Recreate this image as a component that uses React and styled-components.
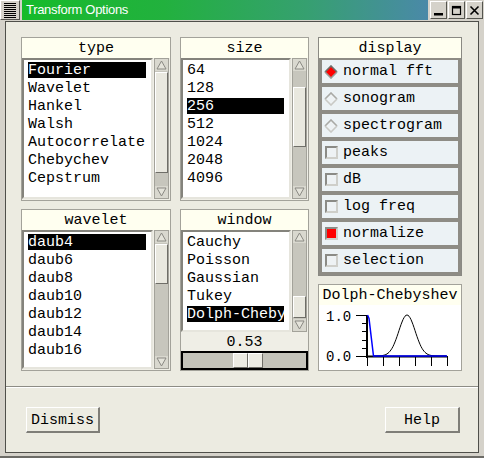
import React from "react";
import styled, { createGlobalStyle } from "styled-components";

/* ======================
   STYLED COMPONENTS
====================== */

const MONO = `"Liberation Mono", "DejaVu Sans Mono", monospace`;

const GlobalStyle = createGlobalStyle`
  html, body {
    margin: 0;
    padding: 0;
    background: #d5d2ca;
  }
`;

const Window = styled.div`
  width: 484px;
  height: 458px;
  box-sizing: border-box;
  display: flex;
  flex-direction: column;
  background: #d5d2ca;
  border-bottom: 2px solid #6c6b66;
  font-family: ${MONO};
  font-size: 15px;
  color: #000;
`;

const TitleBar = styled.div`
  height: 20px;
  flex: none;
  display: flex;
  gap: 2px;
`;

const MenuButton = styled.div`
  width: 20px;
  box-sizing: border-box;
  border: 1px solid;
  border-color: #fff #55554f #55554f #fff;
  background:
    repeating-linear-gradient(to bottom, #000 0 1px, transparent 1px 2px) 3px 2px / 12px 15px no-repeat,
    #d5d2ca;
`;

const Title = styled.div`
  flex: 1;
  padding-left: 4px;
  line-height: 20px;
  background: linear-gradient(90deg, #16bb2b 0%, #22b13e 35%, #36a070 70%, #4a89a8 100%);
  color: #fff;
  font-family: "Liberation Sans", Arial, sans-serif;
  font-size: 13px;
  letter-spacing: -0.3px;
`;

const Controls = styled.div`
  display: flex;
  gap: 1px;
  padding: 1px 1px 1px 0;
`;

const CtrlButton = styled.div`
  width: 17px;
  box-sizing: border-box;
  border: 1px solid;
  border-color: #fff #55554f #55554f #fff;
  background: #d5d2ca;
  display: flex;
  align-items: center;
  justify-content: center;
`;

const Body = styled.div`
  flex: 1;
  margin: 1px 5px 3px 5px;
  border: 1px solid #4f4f4a;
  background: #ecebe1;
  display: flex;
  flex-direction: column;
`;

const Grid = styled.div`
  display: flex;
  gap: 9px;
  padding: 15px 15px 0 15px;
  height: 334px;
`;

const Column = styled.div`
  width: ${(p) => p.$w}px;
  display: flex;
  flex-direction: column;
  gap: 8px;
`;

const Panel = styled.div`
  box-sizing: border-box;
  border: 1px solid ${(p) => (p.$dark ? "#8a8983" : "#a3a29a")};
  background: ${(p) => (p.$dark ? "#8e8c85" : "#efeee6")};
  display: flex;
  flex-direction: column;
  ${(p) => (p.$h ? `height: ${p.$h}px; flex: none;` : "flex: 1;")}
`;

const PanelHeader = styled.div`
  height: 20px;
  flex: none;
  box-sizing: border-box;
  padding-top: 1px;
  line-height: 20px;
  text-align: center;
  background: #fffff0;
  white-space: nowrap;
`;

const ListBox = styled.div`
  display: flex;
  gap: 1px;
  padding: 0 1px ${(p) => (p.$h ? 0 : 1)}px 0;
  ${(p) => (p.$h ? `height: ${p.$h}px; flex: none; box-sizing: border-box;` : "flex: 1;")}
`;

const List = styled.div`
  flex: 1;
  min-width: 0;
  background: #fff;
  border: 2px solid;
  border-color: #84837c #e6e5dd #e6e5dd #84837c;
  padding: 2px 5px 0 4px;
  overflow: hidden;
`;

const Item = styled.div`
  height: 16px;
  line-height: 17px;
  margin-bottom: 2px;
  white-space: nowrap;
  background: ${(p) => (p.$selected ? "#000" : "transparent")};
  color: ${(p) => (p.$selected ? "#fff" : "#000")};
`;

const Scroll = styled.div`
  width: 15px;
  flex: none;
  box-sizing: border-box;
  background: #c7c6bd;
  border: 1px solid #a3a29a;
  display: flex;
  flex-direction: column;
`;

const ArrowBox = styled.div`
  height: 12px;
  flex: none;
  display: flex;
  align-items: center;
  justify-content: center;
  background: #d9d8cf;
`;

const Track = styled.div`
  flex: 1;
  display: flex;
  flex-direction: column;
`;

const TrackGap = styled.div`
  flex: ${(p) => p.$grow} 1 0;
`;

const Thumb = styled.div`
  flex: ${(p) => p.$grow} 1 0;
  background: #e9e8df;
  border: 1px solid;
  border-color: #fff #6f6e68 #6f6e68 #fff;
`;

const ValueLabel = styled.div`
  height: 19px;
  line-height: 21px;
  text-align: center;
  flex: none;
`;

const Slider = styled.div`
  height: 19px;
  box-sizing: border-box;
  flex: none;
  border: 2px solid #000;
  background: #c4c3ba;
  display: flex;
`;

const SliderThumb = styled.div`
  width: 30px;
  display: flex;
`;

const SliderHalf = styled.div`
  flex: 1;
  background: #ecebe3;
  border: 1px solid;
  border-color: #fff #6f6e68 #6f6e68 #fff;
`;

const OptionStack = styled.div`
  display: flex;
  flex-direction: column;
  gap: 4px;
  padding: 2px 3px 3px 3px;
`;

const Option = styled.div`
  height: 23px;
  background: #ecf2f5;
  display: flex;
  align-items: center;
  gap: 5px;
  padding-left: 2px;
  white-space: nowrap;
  line-height: 24px;
`;

const IndicatorBox = styled.span`
  width: 14px;
  height: 14px;
  display: flex;
  align-items: center;
  justify-content: center;
`;

const CheckSquare = styled.span`
  width: 13px;
  height: 13px;
  box-sizing: border-box;
  border: 2px solid;
  border-color: #8b8b86 #cfcfca #cfcfca #8b8b86;
  background: ${(p) => (p.$on ? "#ff0000" : "#eef2f4")};
`;

const GraphArea = styled.div`
  flex: 1;
  background: #fff;
`;

const Separator = styled.div`
  margin-top: 15px;
  border-top: 1px solid #8d8c85;
  border-bottom: 1px solid #fff;
`;

const ButtonRow = styled.div`
  display: flex;
  justify-content: space-between;
  padding: 19px 18px 19px 20px;
`;

const PushButton = styled.button`
  width: ${(p) => p.$w}px;
  height: 26px;
  box-sizing: border-box;
  padding: 1px 0 0 0;
  background: #ecebe1;
  border-style: solid;
  border-width: 1px 2px 2px 1px;
  border-color: #fff #7f7e78 #7f7e78 #fff;
  font-family: ${MONO};
  font-size: 15px;
  color: #000;
`;

/* ======================
   PARTS
====================== */

const Arrow = ({ up }) => (
  <ArrowBox>
    <svg width="11" height="10" viewBox="0 0 11 10">
      <polygon
        points={up ? "1,9 5.5,1 10,9" : "1,1 10,1 5.5,9"}
        fill="#e4e3da"
        stroke="#8a8983"
        strokeWidth="1"
      />
    </svg>
  </ArrowBox>
);

const ScrollBar = ({ before, size, after }) => (
  <Scroll>
    <Arrow up />
    <Track>
      <TrackGap $grow={before} />
      <Thumb $grow={size} />
      <TrackGap $grow={after} />
    </Track>
    <Arrow />
  </Scroll>
);

const ListPanel = ({ title, items, selected, scroll, h, children }) => (
  <Panel $h={h}>
    <PanelHeader>{title}</PanelHeader>
    <ListBox $h={children ? 102 : undefined}>
      <List>
        {items.map((it, i) => (
          <Item key={it} $selected={i === selected}>
            {it}
          </Item>
        ))}
      </List>
      <ScrollBar {...scroll} />
    </ListBox>
    {children}
  </Panel>
);

const Diamond = ({ on }) => (
  <svg width="14" height="14" viewBox="0 0 14 14">
    <polygon points="7,1 13,7 7,13 1,7" fill={on ? "#ff0000" : "#eef2f4"} />
    <polyline points="1,7 7,1 13,7" fill="none" stroke={on ? "#6e6e6a" : "#a9a9a5"} strokeWidth="1.6" />
    <polyline points="1,7 7,13 13,7" fill="none" stroke={on ? "#9a9a96" : "#c9c9c5"} strokeWidth="1.6" />
  </svg>
);

const displayOptions = [
  { label: "normal fft", radio: true, on: true },
  { label: "sonogram", radio: true },
  { label: "spectrogram", radio: true },
  { label: "peaks" },
  { label: "dB" },
  { label: "log freq" },
  { label: "normalize", on: true },
  { label: "selection" },
];

const bell = Array.from({ length: 73 }, (_, i) => {
  const x = 55 + i;
  const y = 51 - 41 * Math.exp(-((x - 88) ** 2) / (2 * 8.2 * 8.2));
  return `${x},${y.toFixed(1)}`;
}).join(" ");

const Graph = () => (
  <svg width="142" height="64" viewBox="0 0 142 64" style={{ display: "block" }}>
    <text x="7" y="16" fontFamily={MONO} fontSize="14">1.0</text>
    <text x="7" y="56" fontFamily={MONO} fontSize="14">0.0</text>
    <g stroke="#000" strokeWidth="1">
      <line x1="37" y1="10.5" x2="48" y2="10.5" />
      <line x1="43" y1="18.5" x2="48" y2="18.5" />
      <line x1="43" y1="26.5" x2="48" y2="26.5" />
      <line x1="43" y1="35.5" x2="48" y2="35.5" />
      <line x1="43" y1="43.5" x2="48" y2="43.5" />
      <line x1="37" y1="51.5" x2="48" y2="51.5" />
      {[48, 64, 80, 96, 112, 128].map((x) => (
        <line key={x} x1={x + 0.5} y1="51" x2={x + 0.5} y2="61" />
      ))}
    </g>
    <line x1="48" y1="10" x2="48" y2="53" stroke="#000" strokeWidth="2" />
    <line x1="48" y1="51.5" x2="128" y2="51.5" stroke="#000" strokeWidth="2" />
    <polyline points={bell} fill="none" stroke="#000" strokeWidth="1" />
    <polyline points="48.5,10 50,13.5 54.5,51 128,51" fill="none" stroke="#0000ff" strokeWidth="1.5" />
  </svg>
);

/* ======================
   COMPONENT
====================== */

const App = () => {
  const windowValue = 0.53;

  return (
    <Window>
      <GlobalStyle />
      <TitleBar>
        <MenuButton />
        <Title>Transform Options</Title>
        <Controls>
          <CtrlButton>
            <svg width="11" height="11" viewBox="0 0 11 11">
              <rect x="1" y="8" width="9" height="2.5" fill="#000" />
            </svg>
          </CtrlButton>
          <CtrlButton>
            <svg width="11" height="11" viewBox="0 0 11 11">
              <rect x="1.5" y="1.5" width="8" height="8" fill="none" stroke="#000" strokeWidth="1.2" />
              <rect x="1" y="1" width="9" height="2.5" fill="#000" />
            </svg>
          </CtrlButton>
          <CtrlButton>
            <svg width="11" height="11" viewBox="0 0 11 11">
              <path d="M1.5 1.5 L9.5 9.5 M9.5 1.5 L1.5 9.5" stroke="#000" strokeWidth="1.6" />
            </svg>
          </CtrlButton>
        </Controls>
      </TitleBar>

      <Body>
        <Grid>
          <Column $w={150}>
            <ListPanel
              title="type"
              h={164}
              items={["Fourier", "Wavelet", "Hankel", "Walsh", "Autocorrelate", "Chebychev", "Cepstrum"]}
              selected={0}
              scroll={{ before: 1, size: 97, after: 13 }}
            />
            <ListPanel
              title="wavelet"
              items={["daub4", "daub6", "daub8", "daub10", "daub12", "daub14", "daub16"]}
              selected={0}
              scroll={{ before: 1, size: 38, after: 72 }}
            />
          </Column>

          <Column $w={129}>
            <ListPanel
              title="size"
              h={164}
              items={["64", "128", "256", "512", "1024", "2048", "4096"]}
              selected={2}
              scroll={{ before: 16, size: 57, after: 38 }}
            />
            <ListPanel
              title="window"
              items={["Cauchy", "Poisson", "Gaussian", "Tukey", "Dolph-Cheby"]}
              selected={4}
              scroll={{ before: 54, size: 21, after: 1 }}
            >
              <ValueLabel>{windowValue.toFixed(2)}</ValueLabel>
              <Slider>
                <SliderThumb style={{ marginLeft: Math.round(windowValue * 92) + 1 }}>
                  <SliderHalf />
                  <SliderHalf />
                </SliderThumb>
              </Slider>
            </ListPanel>
          </Column>

          <Column $w={144}>
            <Panel $h={239} $dark>
              <PanelHeader>display</PanelHeader>
              <OptionStack>
                {displayOptions.map((o) => (
                  <Option key={o.label}>
                    <IndicatorBox>
                      {o.radio ? <Diamond on={o.on} /> : <CheckSquare $on={o.on} />}
                    </IndicatorBox>
                    {o.label}
                  </Option>
                ))}
              </OptionStack>
            </Panel>
            <Panel>
              <PanelHeader>Dolph-Chebyshev</PanelHeader>
              <GraphArea>
                <Graph />
              </GraphArea>
            </Panel>
          </Column>
        </Grid>

        <Separator />

        <ButtonRow>
          <PushButton $w={74}>Dismiss</PushButton>
          <PushButton $w={75}>Help</PushButton>
        </ButtonRow>
      </Body>
    </Window>
  );
};

export default App;
